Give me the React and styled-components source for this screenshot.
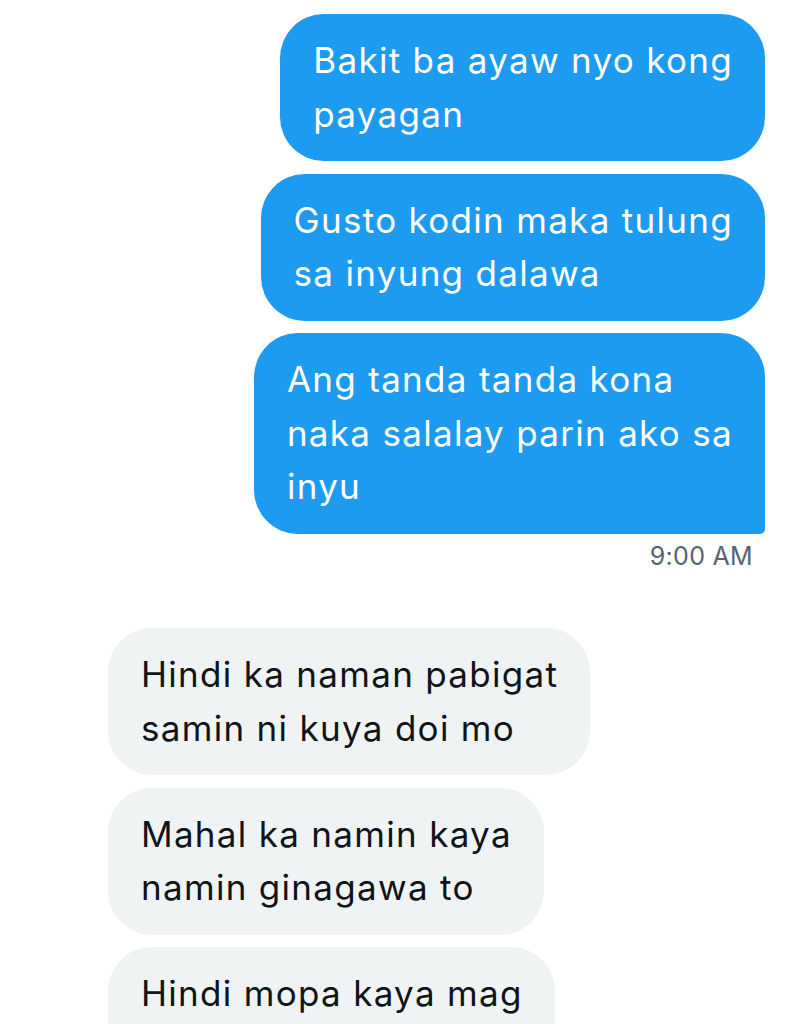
import React from "react";
import styled, { createGlobalStyle } from "styled-components";

const Global = createGlobalStyle`
  html, body { margin: 0; padding: 0; background: #ffffff; overflow: hidden; }
  body { font-family: Inter, "Noto Sans", sans-serif; }
`;

const Thread = styled.div`
  display: flex;
  flex-direction: column;
  padding: 14px 30px 0 108px;
  height: 1024px;
  box-sizing: border-box;
  overflow: hidden;
`;

const Group = styled.div`
  flex-shrink: 0;
  display: flex;
  flex-direction: column;
  align-items: ${(p) => (p.$mine ? "flex-end" : "flex-start")};
  gap: 12.5px;
`;

const Bubble = styled.div`
  flex-shrink: 0;
  box-sizing: border-box;
  padding: 20px 32px 20px 33px;
  border-radius: 44px;
  ${(p) => p.$last && p.$mine && "border-bottom-right-radius: 5px;"}
  background: ${(p) => (p.$mine ? "#1d9bf0" : "#eff3f4")};
  color: ${(p) => (p.$mine ? "#ffffff" : "#0f1419")};
  font-size: 35px;
  line-height: 53.5px;
  white-space: pre-line;
  letter-spacing: 1.3px;
`;

const Time = styled.div`
  margin-top: -5px;
  margin-right: 12px;
  font-size: 25px;
  line-height: 30px;
  color: #536471;
  letter-spacing: 0.3px;
`;

const Spacer = styled.div`
  flex-shrink: 0;
  height: 57px;
`;

const mine = [
  "Bakit ba ayaw nyo kong\npayagan",
  "Gusto kodin maka tulung\nsa inyung dalawa",
  "Ang tanda tanda kona\nnaka salalay parin ako sa\ninyu",
];

const theirs = [
  "Hindi ka naman pabigat\nsamin ni kuya doi mo",
  "Mahal ka namin kaya\nnamin ginagawa to",
  "Hindi mopa kaya mag\nisa",
];

export default function App() {
  return (
    <>
      <Global />
      <Thread>
        <Group $mine>
          {mine.map((t, i) => (
            <Bubble key={i} $mine $last={i === mine.length - 1}>
              {t}
            </Bubble>
          ))}
          <Time>9:00 AM</Time>
        </Group>
        <Spacer />
        <Group>
          {theirs.map((t, i) => (
            <Bubble key={i}>{t}</Bubble>
          ))}
        </Group>
      </Thread>
    </>
  );
}
